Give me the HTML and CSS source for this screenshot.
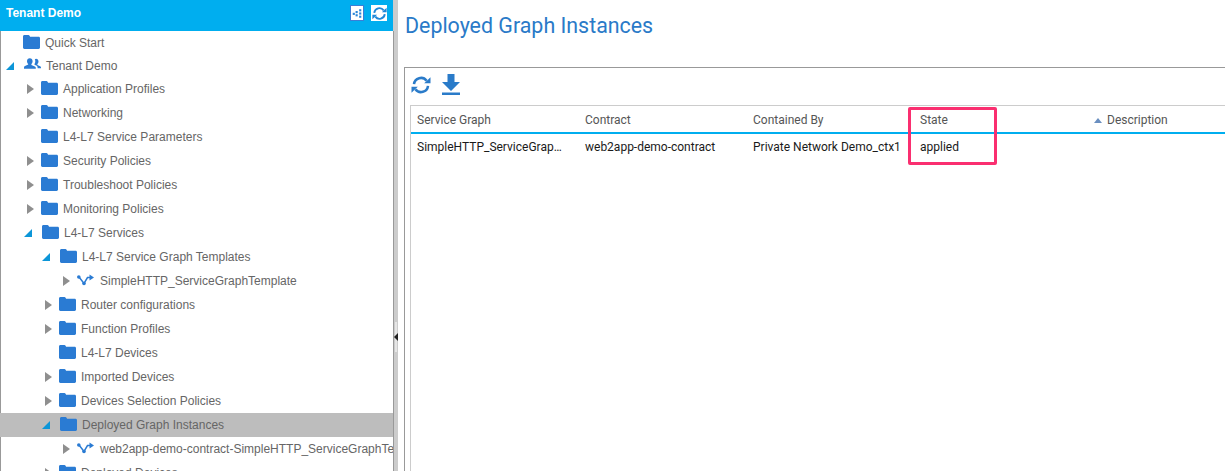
FILE: index.html
```html
<!DOCTYPE html>
<html lang="en">
<head>
  <meta charset="UTF-8" />
  <title>Deployed Graph Instances</title>
  <link rel="stylesheet" href="styles.css">
</head>
<body>

<svg class="sprites" aria-hidden="true">
  <symbol id="i-folder" viewBox="0 0 17 14">
    <path d="M0 1.5C0 .7.6 0 1.4 0h4c.6 0 1 .3 1.3 1l.4.8h8.5c.8 0 1.4.6 1.4 1.3v9.5c0 .8-.6 1.4-1.4 1.4H1.4C.6 14 0 13.400 0 12.600z"/>
  </symbol>
  <symbol id="i-people" viewBox="0 0 17 12">
    <path d="M5.800.2c1.700 0 2.800 1.300 2.800 3 0 1.200-.5 2.200-1.200 2.800v1l3.400 1.500c.7.300 1 .8 1 1.500v.8H0V9.500c0-.7.300-1.200 1-1.500l3.200-1.400V6c-.7-.6-1.200-1.600-1.200-2.800 0-1.700 1.100-3 2.800-3z"/>
    <path d="M12 .8c1.500 0 2.500 1.200 2.500 2.700 0 1.100-.4 2-1.100 2.600v.8l2.700 1.300c.6.300.9.700.9 1.300v.8h-3.400v-.6c0-1-.5-1.700-1.400-2.100l-1.700-.8V6c.5-.7.8-1.600.8-2.700 0-.8-.2-1.500-.5-2 .5-.3 1-.5 1.200-.5z"/>
  </symbol>
  <symbol id="i-graph" viewBox="0 0 17 12">
    <circle cx="1.800" cy="3" r="1.800"/>
    <circle cx="7" cy="9.500" r="1.800"/>
    <path d="M2 3l5 6.500L10.500 3.500H13" fill="none" stroke="currentColor" stroke-width="1.500"/>
    <path d="M12.500.5L17 3.500l-4.500 3z"/>
  </symbol>
  <symbol id="i-refresh" viewBox="0 0 20 20">
    <path d="M3 9.200A7 7 0 0 1 15.600 5.800" fill="none" stroke="currentColor" stroke-width="2.500"/>
    <path d="M17 10.800A7 7 0 0 1 4.400 14.200" fill="none" stroke="currentColor" stroke-width="2.500"/>
    <path d="M13.200 8.200h6.300V2.200z"/>
    <path d="M6.800 11.800H.5v6z"/>
  </symbol>
</svg>

<div class="layout">
  <aside class="sidebar">
    <header class="side-head">
      <span class="side-title">Tenant Demo</span>
      <span class="head-btn head-btn-outline">
        <svg class="dots" viewBox="0 0 14 14"><rect x="1" y="6" width="3" height="3"/><rect x="5" y="3.500" width="3" height="3"/><rect x="5" y="8" width="3" height="3"/><rect x="10" y="1" width="3" height="3"/><rect x="10" y="5.500" width="3" height="3"/><rect x="10" y="10" width="3" height="3"/></svg>
      </span>
      <span class="head-btn">
        <svg class="head-refresh"><use href="#i-refresh"/></svg>
      </span>
    </header>
    <div class="tree">
      <div class="row row-tight d0"><span class="twist"></span><svg class="ico"><use href="#i-folder"/></svg><span class="lbl">Quick Start</span></div>
      <div class="row row-tight d0 open"><span class="twist"></span><svg class="ico ico-people"><use href="#i-people"/></svg><span class="lbl">Tenant Demo</span></div>
      <div class="row d1 shut"><span class="twist"></span><svg class="ico"><use href="#i-folder"/></svg><span class="lbl">Application Profiles</span></div>
      <div class="row d1 shut"><span class="twist"></span><svg class="ico"><use href="#i-folder"/></svg><span class="lbl">Networking</span></div>
      <div class="row d1"><span class="twist"></span><svg class="ico"><use href="#i-folder"/></svg><span class="lbl">L4-L7 Service Parameters</span></div>
      <div class="row d1 shut"><span class="twist"></span><svg class="ico"><use href="#i-folder"/></svg><span class="lbl">Security Policies</span></div>
      <div class="row d1 shut"><span class="twist"></span><svg class="ico"><use href="#i-folder"/></svg><span class="lbl">Troubleshoot Policies</span></div>
      <div class="row d1 shut"><span class="twist"></span><svg class="ico"><use href="#i-folder"/></svg><span class="lbl">Monitoring Policies</span></div>
      <div class="row d1 open"><span class="twist"></span><svg class="ico"><use href="#i-folder"/></svg><span class="lbl">L4-L7 Services</span></div>
      <div class="row d2 open"><span class="twist"></span><svg class="ico"><use href="#i-folder"/></svg><span class="lbl">L4-L7 Service Graph Templates</span></div>
      <div class="row d3 shut"><span class="twist"></span><svg class="ico ico-graph"><use href="#i-graph"/></svg><span class="lbl">SimpleHTTP_ServiceGraphTemplate</span></div>
      <div class="row d2 shut"><span class="twist"></span><svg class="ico"><use href="#i-folder"/></svg><span class="lbl">Router configurations</span></div>
      <div class="row d2 shut"><span class="twist"></span><svg class="ico"><use href="#i-folder"/></svg><span class="lbl">Function Profiles</span></div>
      <div class="row d2"><span class="twist"></span><svg class="ico"><use href="#i-folder"/></svg><span class="lbl">L4-L7 Devices</span></div>
      <div class="row d2 shut"><span class="twist"></span><svg class="ico"><use href="#i-folder"/></svg><span class="lbl">Imported Devices</span></div>
      <div class="row d2 shut"><span class="twist"></span><svg class="ico"><use href="#i-folder"/></svg><span class="lbl">Devices Selection Policies</span></div>
      <div class="row d2 open selected"><span class="twist"></span><svg class="ico"><use href="#i-folder"/></svg><span class="lbl">Deployed Graph Instances</span></div>
      <div class="row d3 shut"><span class="twist"></span><svg class="ico ico-graph"><use href="#i-graph"/></svg><span class="lbl">web2app-demo-contract-SimpleHTTP_ServiceGraphTemplate</span></div>
      <div class="row d2 shut"><span class="twist"></span><svg class="ico"><use href="#i-folder"/></svg><span class="lbl">Deployed Devices</span></div>
    </div>
  </aside>

  <div class="splitter"><span class="grip"></span></div>

  <main class="content">
    <h1 class="page-title">Deployed Graph Instances</h1>
    <section class="panel">
      <div class="toolbar">
        <svg class="tool-refresh"><use href="#i-refresh"/></svg>
        <svg class="tool-download" viewBox="0 0 18 21"><path d="M5.500 0h7v8H18l-9 9-9-9h5.500z"/><rect y="18.500" width="18" height="2.500"/></svg>
      </div>
      <div class="grid">
        <div class="grid-head">
          <div class="cell c-graph">Service Graph</div>
          <div class="cell c-contract">Contract</div>
          <div class="cell c-owner">Contained By</div>
          <div class="cell c-state">State</div>
          <div class="cell c-desc"><span class="sort-up"></span>Description</div>
        </div>
        <div class="grid-row">
          <div class="cell c-graph clip">SimpleHTTP_ServiceGraphTemplate</div>
          <div class="cell c-contract">web2app-demo-contract</div>
          <div class="cell c-owner">Private Network Demo_ctx1</div>
          <div class="cell c-state">applied</div>
          <div class="cell c-desc"></div>
        </div>
        <div class="highlight"></div>
      </div>
    </section>
  </main>
</div>

</body>
</html>
```

FILE: styles.css
```css
html, body {
  height: 100%;
}
body {
  margin: 0;
  overflow: hidden;
  background: #fff;
  font-family: Roboto, 'Liberation Sans', sans-serif;
  font-size: 12px;
}
.sprites {
  display: none;
}
.layout {
  display: flex;
  height: 471px;
}

/* left tree */
.sidebar {
  width: 393px;
  flex: none;
  display: flex;
  flex-direction: column;
  overflow: hidden;
}
.side-head {
  height: 31px;
  flex: none;
  display: flex;
  align-items: center;
  background: #00aeef;
  padding: 0 6px 5px 6px;
  gap: 7px;
  box-sizing: border-box;
}
.side-title {
  flex: 1;
  color: #fff;
  font-weight: 700;
  font-family: 'Liberation Sans', sans-serif;
  font-size: 12px;
}
.head-btn {
  width: 16px;
  height: 16px;
  background: #fff;
  display: flex;
  align-items: center;
  justify-content: center;
  color: #1f88d8;
}
.head-btn-outline {
  width: 14px;
  box-sizing: border-box;
  border: 1px solid #3b7ed6;
}
.dots {
  width: 10px;
  height: 11px;
  fill: #2a86d8;
}
.head-refresh {
  width: 15px;
  height: 15px;
  fill: #1f88d8;
}
.tree {
  flex: 1;
  border-left: 1px solid #999;
  color: #666;
  font-family: 'Liberation Sans', sans-serif;
}
.row {
  height: 24px;
  display: flex;
  align-items: center;
  white-space: nowrap;
  overflow: hidden;
  margin-left: -1px;
  padding-left: 6px;
}
.row-tight {
  height: 23px;
}
.d1 { padding-left: 24px; }
.d2 { padding-left: 42px; }
.d3 { padding-left: 60px; }
.selected {
  background: #bdbdbd;
}
.twist {
  width: 17px;
  flex: none;
  position: relative;
  height: 12px;
}
.open .twist {
  width: 18px;
}
.shut .twist::before {
  content: "";
  position: absolute;
  left: 3px;
  top: 1px;
  border-left: 7px solid #8f8f8f;
  border-top: 5px solid transparent;
  border-bottom: 5px solid transparent;
}
.open .twist::before {
  content: "";
  position: absolute;
  left: 0;
  top: 2px;
  border-right: 8px solid #0c96d8;
  border-top: 8px solid transparent;
}
.ico {
  width: 17px;
  height: 14px;
  flex: none;
  fill: #2a7bd3;
  margin-right: 5px;
  margin-top: -2px;
  color: #2a7bd3;
}
.ico-people {
  height: 12px;
  margin-top: -4px;
}
.ico-graph {
  height: 12px;
  margin-right: 6px;
  margin-top: -2px;
}
.lbl {
  line-height: 24px;
}

.splitter {
  width: 5px;
  flex: none;
  background: linear-gradient(#999, #999) 0 31px / 1px 100% no-repeat, #ccc;
  position: relative;
}
.splitter::before {
  content: "";
  position: absolute;
  left: 2px;
  top: 322px;
  width: 2px;
  height: 30px;
  background: #e6e6e6;
}
.grip {
  position: absolute;
  left: 1px;
  top: 333px;
  border-right: 4px solid #222;
  border-top: 4px solid transparent;
  border-bottom: 4px solid transparent;
}

/* main area */
.content {
  flex: 1;
  min-width: 0;
  padding-left: 6px;
}
.page-title {
  margin: 0;
  height: 67px;
  padding: 13px 0 0 1px;
  box-sizing: border-box;
  font-size: 21.4px;
  line-height: 26px;
  font-weight: 400;
  color: #2a7ac8;
}
.panel {
  height: 404px;
  border-top: 1px solid #999;
  border-left: 1px solid #999;
  padding-left: 5px;
}
.toolbar {
  height: 37px;
  display: flex;
  align-items: center;
  gap: 11px;
  padding: 0 0 4px 1px;
  color: #2a7bc9;
  fill: #2a7bc9;
  box-sizing: border-box;
}
.tool-refresh {
  width: 20px;
  height: 20px;
}
.tool-download {
  width: 18px;
  height: 21px;
}
.grid {
  position: relative;
  border-top: 1px solid #ccc;
  border-left: 1px solid #ccc;
  height: 366px;
}
.grid-head {
  display: flex;
  height: 28px;
  border-bottom: 2px solid #00aeef;
  color: #555;
  align-items: center;
  padding-top: 2px;
  box-sizing: border-box;
}
.grid-row {
  display: flex;
  height: 25px;
  align-items: center;
  color: #1a1a1a;
}
.cell {
  flex: none;
  padding-left: 6px;
  box-sizing: border-box;
  white-space: nowrap;
}
.c-graph, .c-contract, .c-owner {
  width: 168px;
}
.c-state {
  width: 167px;
  padding-left: 5px;
}
.c-desc {
  flex: 1;
  padding-left: 12px;
  display: flex;
  align-items: center;
}
.clip {
  overflow: hidden;
  text-overflow: ellipsis;
  padding-right: 15px;
}
.sort-up {
  border-bottom: 5px solid #6a8fc0;
  border-left: 4px solid transparent;
  border-right: 4px solid transparent;
  margin-right: 5px;
}
.highlight {
  position: absolute;
  left: 497px;
  top: 1px;
  width: 83px;
  height: 52px;
  border: 3px solid #fa2f70;
  border-radius: 2px;
}
```
